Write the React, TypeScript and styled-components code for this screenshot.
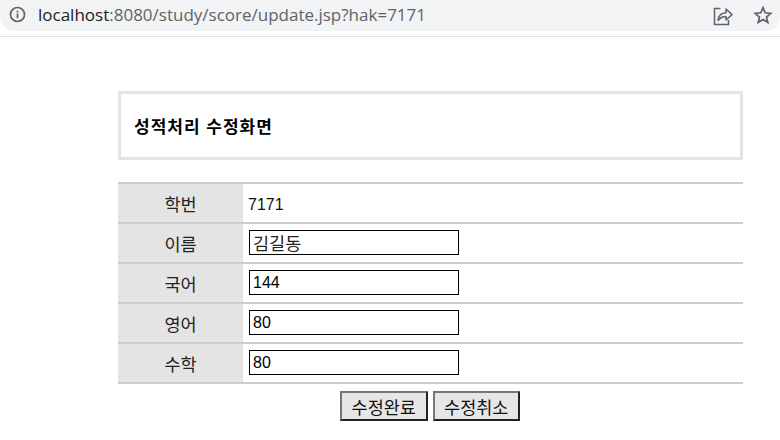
import React from "react";
import styled, { createGlobalStyle } from "styled-components";

const GlobalStyle = createGlobalStyle`
  html, body {
    margin: 0;
    padding: 0;
    background: #fff;
    overflow: hidden;
  }
  body {
    font-family: "Liberation Sans", "Noto Sans CJK KR", sans-serif;
  }
`;

const BrowserBar = styled.header`
  height: 36px;
  border-bottom: 1px solid #dfe1e5;
  box-sizing: content-box;
`;

const Omnibox = styled.div`
  height: 31px;
  background: #f1f3f4;
  border-radius: 0 0 14px 14px;
  display: flex;
  align-items: center;
  padding: 0 7px 0 9px;
`;

const InfoIcon = styled.svg`
  width: 17px;
  height: 17px;
  flex-shrink: 0;
  margin-right: 12px;
  margin-top: -2px;
`;

const Url = styled.div`
  flex: 1;
  font-family: "Open Sans", "Liberation Sans", sans-serif;
  font-size: 17px;
  color: #5f6368;
  white-space: nowrap;
  margin-top: -3px;

  b {
    font-weight: 400;
    color: #202124;
  }
`;

const ShareIcon = styled.svg`
  width: 20px;
  height: 20px;
  flex-shrink: 0;
  margin-top: 1px;
`;

const StarIcon = styled.svg`
  width: 20px;
  height: 20px;
  flex-shrink: 0;
  margin-left: 20px;
  margin-top: -1px;
`;

const Page = styled.main`
  width: 625px;
  margin: 54px 0 0 118px;
`;

const TitleBox = styled.div`
  height: 69px;
  box-sizing: border-box;
  border: 3px solid #e4e4e4;
  display: flex;
  align-items: center;
  padding-left: 13px;
  font-size: 17px;
  letter-spacing: 1px;
  font-weight: 700;
  color: #000;
`;

const ScoreTable = styled.div`
  margin-top: 22px;
  border-top: 2px solid #cccccc;
`;

const Row = styled.div`
  display: grid;
  grid-template-columns: 125px 1fr;
  height: 40px;
  box-sizing: border-box;
  border-bottom: 2px solid #cccccc;
`;

const Label = styled.div`
  background: #e4e4e4;
  display: flex;
  align-items: center;
  justify-content: center;
  font-size: 17.5px;
  color: #222;
`;

const Value = styled.div<{ $plain?: boolean }>`
  display: flex;
  align-items: center;
  padding-left: ${(props) => (props.$plain ? "5px" : "6px")};
  padding-top: ${(props) => (props.$plain ? "3px" : "0")};
  font-size: 16px;
  color: #111;
`;

const TextInput = styled.input<{ $hangul?: boolean }>`
  width: 210px;
  height: 25px;
  box-sizing: border-box;
  border: 1px solid #000;
  padding: 0 3px;
  margin: 0 0 1px;
  font-family: inherit;
  font-size: ${(props) => (props.$hangul ? "17.5px" : "16px")};
  color: ${(props) => (props.$hangul ? "#222" : "#000")};
  background: #fff;
  outline: none;
  border-radius: 0;
`;

const Actions = styled.div`
  display: flex;
  justify-content: center;
  gap: 5px;
  margin-top: 7px;
  padding-right: 1px;
`;

const ActionButton = styled.button`
  width: 87.5px;
  height: 30px;
  padding: 0;
  box-sizing: border-box;
  background: #e6e6e6;
  border: 2px solid;
  border-color: #767676 #222 #222 #767676;
  border-radius: 0;
  font-family: inherit;
  font-size: 17.5px;
  color: #111;
  white-space: nowrap;
`;

const rows = [
  { label: "이름", value: "김길동", hangul: true },
  { label: "국어", value: "144" },
  { label: "영어", value: "80" },
  { label: "수학", value: "80" },
];

export default function App() {
  return (
    <>
      <GlobalStyle />
      <BrowserBar>
        <Omnibox>
          <InfoIcon viewBox="0 0 16 16" fill="none">
            <circle cx="8" cy="8" r="6.6" stroke="#5f6368" strokeWidth="1.6" />
            <rect x="7.2" y="7" width="1.6" height="4.4" fill="#5f6368" />
            <rect x="7.2" y="4.4" width="1.6" height="1.6" fill="#5f6368" />
          </InfoIcon>
          <Url>
            <b>localhost</b>:8080/study/score/update.jsp?hak=7171
          </Url>
          <ShareIcon viewBox="0 0 20 20" fill="none" stroke="#5f6368" strokeWidth="1.5">
            <path d="M7.5 2.5H1.5V18.5H15.5V14" />
            <path d="M5 14.5C5.5 9.5 8.5 7 13 6.8V3L19 8.6 13 14V10.4C9.5 10.4 7 11.8 5 14.5Z" strokeLinejoin="round" />
          </ShareIcon>
          <StarIcon viewBox="0 0 20 20" fill="none" stroke="#5f6368" strokeWidth="1.7">
            <path d="M10 2.6 12.2 7.8 17.8 8.3 13.5 12 14.8 17.5 10 14.6 5.2 17.5 6.5 12 2.2 8.3 7.8 7.8Z" strokeLinejoin="miter" />
          </StarIcon>
        </Omnibox>
      </BrowserBar>
      <Page>
        <TitleBox>성적처리 수정화면</TitleBox>
        <ScoreTable>
          <Row>
            <Label>학번</Label>
            <Value $plain>7171</Value>
          </Row>
          {rows.map((row) => (
            <Row key={row.label}>
              <Label>{row.label}</Label>
              <Value>
                <TextInput defaultValue={row.value} $hangul={row.hangul} />
              </Value>
            </Row>
          ))}
        </ScoreTable>
        <Actions>
          <ActionButton>수정완료</ActionButton>
          <ActionButton>수정취소</ActionButton>
        </Actions>
      </Page>
    </>
  );
}
